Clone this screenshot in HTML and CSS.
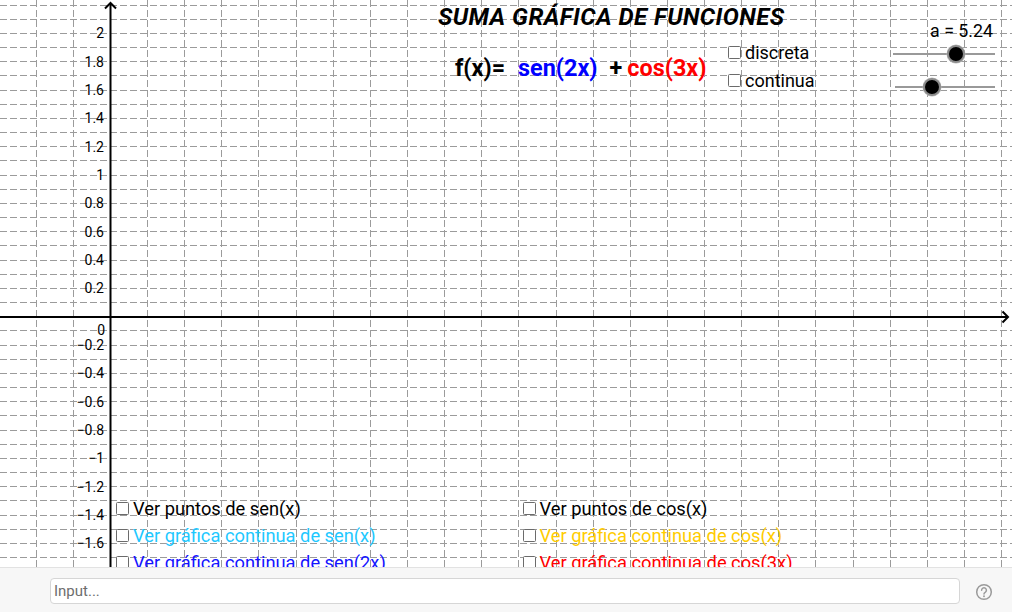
FILE: index.html
```html
<!DOCTYPE html>
<html lang="es">
<head>
<meta charset="utf-8">
<title>Suma gráfica de funciones</title>
<link rel="stylesheet" href="styles.css">
</head>
<body>
<div class="app">
  <div class="view">
    <svg class="grid" width="1012" height="567" viewBox="0 0 1012 567" xmlns="http://www.w3.org/2000/svg">
      <path class="gridlines" d="M0 5.5H1012M0 19.5H1012M0 33.5H1012M0 47.5H1012M0 61.5H1012M0 75.5H1012M0 90.5H1012M0 104.5H1012M0 118.5H1012M0 132.5H1012M0 146.5H1012M0 160.5H1012M0 175.5H1012M0 189.5H1012M0 203.5H1012M0 217.5H1012M0 231.5H1012M0 245.5H1012M0 260.5H1012M0 274.5H1012M0 288.5H1012M0 302.5H1012M0 330.5H1012M0 345.5H1012M0 359.5H1012M0 373.5H1012M0 387.5H1012M0 401.5H1012M0 415.5H1012M0 430.5H1012M0 444.5H1012M0 458.5H1012M0 472.5H1012M0 486.5H1012M0 500.5H1012M0 515.5H1012M0 529.5H1012M0 543.5H1012M0 557.5H1012"/>
      <path class="gridlines" d="M36.5 0V567M73.5 0V567M147.5 0V567M184.5 0V567M221.5 0V567M258.5 0V567M296.5 0V567M333.5 0V567M370.5 0V567M407.5 0V567M444.5 0V567M481.5 0V567M518.5 0V567M556.5 0V567M593.5 0V567M630.5 0V567M667.5 0V567M704.5 0V567M741.5 0V567M778.5 0V567M815.5 0V567M853.5 0V567M890.5 0V567M927.5 0V567M964.5 0V567M1001.5 0V567"/>
      <path class="axis" d="M110.5 567V3M0 317H1008"/>
      <path class="arrow" d="M105 8.5L110.5 3L116 8.5M1002.5 311.5L1008 317L1002.5 322.5"/>
      <g class="ylabels">
        <text x="104" y="38.3">2</text>
        <text x="104" y="66.6">1.8</text>
        <text x="104" y="94.9">1.6</text>
        <text x="104" y="123.3">1.4</text>
        <text x="104" y="151.6">1.2</text>
        <text x="104" y="179.9">1</text>
        <text x="104" y="208.3">0.8</text>
        <text x="104" y="236.6">0.6</text>
        <text x="104" y="264.9">0.4</text>
        <text x="104" y="293.3">0.2</text>
        <text x="105" y="334.8">0</text>
        <text x="104" y="350">−0.2</text>
        <text x="104" y="378.3">−0.4</text>
        <text x="104" y="406.6">−0.6</text>
        <text x="104" y="434.9">−0.8</text>
        <text x="104" y="463.3">−1</text>
        <text x="104" y="491.6">−1.2</text>
        <text x="104" y="519.9">−1.4</text>
        <text x="104" y="548.3">−1.6</text>
      </g>
    </svg>

    <h1 class="title">SUMA GRÁFICA DE FUNCIONES</h1>

    <div class="formula">
      <span class="fx">f(x)=</span>
      <span class="sen">sen(2x)</span>
      <span class="plus">+</span>
      <span class="cos">cos(3x)</span>
    </div>

    <div class="modes">
      <label class="check"><span class="box"></span>discreta</label>
      <label class="check"><span class="box"></span>continua</label>
    </div>

    <div class="sliders">
      <div class="slider-label">a = 5.24</div>
      <div class="slider s1"><span class="track"></span><span class="knob" style="left: 63px"></span></div>
      <div class="slider s2"><span class="track"></span><span class="knob" style="left: 37px"></span></div>
    </div>

    <div class="options col1">
      <label class="check"><span class="box"></span>Ver puntos de sen(x)</label>
      <label class="check cyan"><span class="box"></span>Ver gráfica continua de sen(x)</label>
      <label class="check blue"><span class="box"></span>Ver gráfica continua de sen(2x)</label>
    </div>

    <div class="options col2">
      <label class="check"><span class="box"></span>Ver puntos de cos(x)</label>
      <label class="check gold"><span class="box"></span>Ver gráfica continua de cos(x)</label>
      <label class="check red"><span class="box"></span>Ver gráfica continua de cos(3x)</label>
    </div>
  </div>

  <div class="inputbar">
    <div class="input">Input...</div>
    <svg class="help" width="18" height="18" viewBox="0 0 18 18" xmlns="http://www.w3.org/2000/svg">
      <circle cx="9" cy="9" r="7.3" fill="none" stroke="#9a9a9a" stroke-width="1.5"/>
      <path d="M6.6 7.2a2.4 2.4 0 1 1 3.6 2.1c-.8.45-1.2.9-1.2 1.8" fill="none" stroke="#9a9a9a" stroke-width="1.5" stroke-linecap="round"/>
      <circle cx="9" cy="13.3" r="0.95" fill="#9a9a9a"/>
    </svg>
  </div>
</div>
</body>
</html>
```

FILE: styles.css
```css
* { box-sizing: border-box; }

html, body {
  margin: 0;
  padding: 0;
  background: #ffffff;
}

body {
  font-family: Roboto, "Liberation Sans", sans-serif;
  color: #000;
}

.app {
  width: 1012px;
  height: 612px;
  display: flex;
  flex-direction: column;
  overflow: hidden;
}

.view {
  position: relative;
  height: 567px;
  flex: none;
  overflow: hidden;
  background: #fff;
}

.grid {
  position: absolute;
  left: 0;
  top: 0;
  display: block;
}

.gridlines {
  fill: none;
  stroke: #9b9b9b;
  stroke-width: 1;
  stroke-dasharray: 7 3;
}

.axis {
  fill: none;
  stroke: #000;
  stroke-width: 2;
}

.arrow {
  fill: none;
  stroke: #000;
  stroke-width: 2;
  stroke-linejoin: miter;
}

.ylabels text {
  font-family: Roboto, "Liberation Sans", sans-serif;
  font-size: 14px;
  text-anchor: end;
  fill: #000;
}

.title {
  position: absolute;
  left: 438px;
  top: 4.8px;
  margin: 0;
  font-size: 24px;
  line-height: 1;
  font-weight: 700;
  font-style: italic;
  letter-spacing: 0.45px;
  white-space: nowrap;
}

.formula {
  position: absolute;
  left: 455px;
  top: 57.4px;
  display: flex;
  align-items: baseline;
  font-size: 23.4px;
  line-height: 1;
  font-weight: 700;
  white-space: nowrap;
}

.fx { margin-right: 13px; }
.sen { color: #0000ff; margin-right: 12px; }
.plus { margin-right: 5px; }
.cos { color: #ff0000; }

.check {
  display: block;
  font-size: 18.3px;
  line-height: 27px;
  white-space: nowrap;
}

.box {
  display: inline-block;
  width: 13px;
  height: 13px;
  border: 1.5px solid #6b6b6b;
  border-radius: 1.5px;
  background: #fff;
  margin-right: 4px;
}

.modes {
  position: absolute;
  left: 728px;
  top: 38.7px;
  display: flex;
  flex-direction: column;
  gap: 1px;
}

.modes .check {
  font-size: 18px;
  line-height: 27px;
}

.sliders {
  position: absolute;
  left: 893px;
  top: 21px;
  width: 105px;
}

.slider-label {
  font-size: 17.8px;
  line-height: 20px;
  text-align: right;
  padding-right: 5px;
}

.slider {
  position: relative;
  height: 18px;
}

.s1 { margin-top: 4px; }
.s2 { margin-top: 15px; margin-left: 2px; }

.track {
  position: absolute;
  left: 0;
  right: 3px;
  top: 8px;
  height: 2px;
  background: #999;
}

.knob {
  position: absolute;
  top: 0;
  width: 18px;
  height: 18px;
  margin-left: -9px;
  border-radius: 50%;
  background: #000;
  border: 2.5px solid #8a8a8a;
  box-shadow: 0 0 0 0.5px #bbb;
}

.options {
  position: absolute;
  top: 495.4px;
  display: flex;
  flex-direction: column;
}

.col1 { left: 116px; }
.col2 { left: 522.5px; }

.cyan { color: #1ec8ff; }
.blue { color: #1414ff; }
.gold { color: #ffcc00; }
.red { color: #ff0000; }

.inputbar {
  flex: none;
  height: 45px;
  display: flex;
  align-items: center;
  padding-left: 50px;
  background: #f7f7f7;
  border-top: 1px solid #e2e2e2;
}

.input {
  width: 910px;
  height: 26px;
  margin-top: 1px;
  border: 1px solid #d6d6d6;
  border-radius: 4px;
  background: #fff;
  color: #6d6d6d;
  font-size: 15px;
  line-height: 24px;
  padding-left: 3px;
}

.help {
  margin-left: 15px;
  margin-top: 3px;
  display: block;
}
```
